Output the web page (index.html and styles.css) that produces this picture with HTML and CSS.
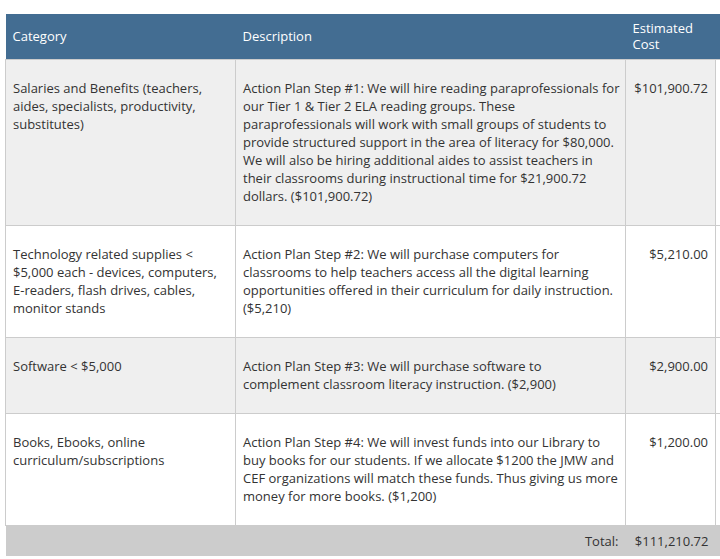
FILE: index.html
```html
<!DOCTYPE html>
<html>
<head>
<meta charset="utf-8">
<link rel="stylesheet" href="styles.css">
</head>
<body>
<div class="page">
  <table class="budget">
    <colgroup>
      <col class="c-cat">
      <col class="c-desc">
      <col class="c-cost">
      <col class="c-extra">
    </colgroup>
    <thead>
      <tr>
        <th>Category</th>
        <th>Description</th>
        <th>Estimated Cost</th>
        <th></th>
      </tr>
    </thead>
    <tbody>
      <tr class="odd">
        <td>Salaries and Benefits (teachers, aides, specialists, productivity, substitutes)</td>
        <td>Action Plan Step #1: We will hire reading paraprofessionals for our Tier 1 &amp; Tier 2 ELA reading groups. These paraprofessionals will work with small groups of students to provide structured support in the area of literacy for $80,000. We will also be hiring additional aides to assist teachers in their classrooms during instructional time for $21,900.72 dollars. ($101,900.72)</td>
        <td class="num">$101,900.72</td>
        <td class="extra"></td>
      </tr>
      <tr>
        <td>Technology related supplies &lt; $5,000 each - devices, computers, E-readers, flash drives, cables, monitor stands</td>
        <td>Action Plan Step #2: We will purchase computers for classrooms to help teachers access all the digital learning opportunities offered in their curriculum for daily instruction. ($5,210)</td>
        <td class="num">$5,210.00</td>
        <td class="extra"></td>
      </tr>
      <tr class="odd">
        <td>Software &lt; $5,000</td>
        <td>Action Plan Step #3: We will purchase software to complement classroom literacy instruction. ($2,900)</td>
        <td class="num">$2,900.00</td>
        <td class="extra"></td>
      </tr>
      <tr>
        <td>Books, Ebooks, online curriculum/subscriptions</td>
        <td>Action Plan Step #4: We will invest funds into our Library to buy books for our students. If we allocate $1200 the JMW and CEF organizations will match these funds. Thus giving us more money for more books. ($1,200)</td>
        <td class="num">$1,200.00</td>
        <td class="extra"></td>
      </tr>
    </tbody>
    <tfoot>
      <tr>
        <td colspan="2" class="total-label">Total:</td>
        <td class="num">$111,210.72</td>
        <td></td>
      </tr>
    </tfoot>
  </table>
</div>
</body>
</html>
```

FILE: styles.css
```css
html, body {
  margin: 0;
  padding: 0;
  background: #ffffff;
  overflow: hidden;
}

.page {
  padding: 14px 0 0 5px;
  font-family: "Open Sans", "Liberation Sans", sans-serif;
  font-size: 13px;
  color: #333333;
  overflow: hidden;
  width: 715px;
  border-top: 2px solid #f4f4f4;
  margin-top: -2px;
}

.budget {
  border-collapse: collapse;
  table-layout: fixed;
  width: 811px;
}

.c-cat { width: 230px; }
.c-desc { width: 390px; }
.c-cost { width: 90px; }
.c-extra { width: 101px; }

.budget th {
  background: #436d92;
  color: #ffffff;
  font-weight: 400;
  text-align: left;
  line-height: 16px;
  padding: 6px 7px 7px;
  height: 32px;
  vertical-align: middle;
  border: none;
}

.budget tbody td {
  border: 1px solid #cccccc;
  padding: 19px 4px 20px 7px;
  line-height: 18px;
  vertical-align: top;
  background: #ffffff;
}

.budget tbody td.num {
  padding-right: 7px;
}

.budget tbody tr.odd td {
  background: #efefef;
}

.budget tbody td.extra,
.budget tbody tr.odd td.extra {
  background: #ffffff;
}

.budget td.num {
  text-align: right;
}

.budget tfoot td {
  background: #cccccc;
  padding: 6px 7px;
  line-height: 18px;
  border: none;
}

.budget tfoot td.total-label {
  text-align: right;
}
```
